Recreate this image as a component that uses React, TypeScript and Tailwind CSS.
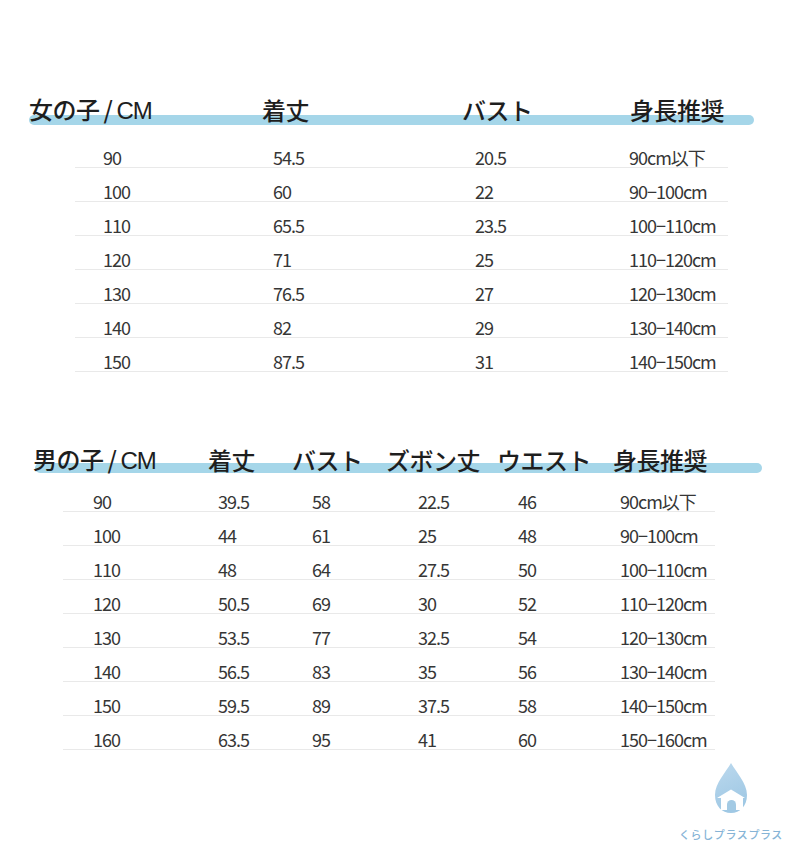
import React from "react";

const girlsHead = [
  { label: "着丈", w: "w-[200px]" },
  { label: "バスト", w: "w-[168px]" },
  { label: "身長推奨", w: "" },
];
const girlsCols = ["w-[170px]", "w-[202px]", "w-[154px]", ""];
const girlsRows = [
  ["90", "54.5", "20.5", "90cm以下"],
  ["100", "60", "22", "90−100cm"],
  ["110", "65.5", "23.5", "100−110cm"],
  ["120", "71", "25", "110−120cm"],
  ["130", "76.5", "27", "120−130cm"],
  ["140", "82", "29", "130−140cm"],
  ["150", "87.5", "31", "140−150cm"],
];

const boysHead = [
  { label: "着丈", w: "w-[84px]" },
  { label: "バスト", w: "w-[94px]" },
  { label: "ズボン丈", w: "w-[111px]" },
  { label: "ウエスト", w: "w-[116px]" },
  { label: "身長推奨", w: "" },
];
const boysCols = ["w-[125px]", "w-[94px]", "w-[106px]", "w-[100px]", "w-[102px]", ""];
const boysRows = [
  ["90", "39.5", "58", "22.5", "46", "90cm以下"],
  ["100", "44", "61", "25", "48", "90−100cm"],
  ["110", "48", "64", "27.5", "50", "100−110cm"],
  ["120", "50.5", "69", "30", "52", "110−120cm"],
  ["130", "53.5", "77", "32.5", "54", "120−130cm"],
  ["140", "56.5", "83", "35", "56", "130−140cm"],
  ["150", "59.5", "89", "37.5", "58", "140−150cm"],
  ["160", "63.5", "95", "41", "60", "150−160cm"],
];

const HeaderRow = ({
  title,
  titleW,
  items,
  className,
}: {
  title: string;
  titleW: string;
  items: { label: string; w: string }[];
  className: string;
}) => (
  <div className={`relative flex h-[24px] items-center text-[24px] leading-none font-medium text-[#1e1e1e] tracking-[-0.5px] ${className}`}>
    <div className={`${titleW} shrink-0 whitespace-nowrap`}>
      {title}
      <span className="px-[4px]">/</span>
      <span style={{ fontFamily: '"Liberation Sans", sans-serif' }} className="font-normal tracking-[-1px]">
        CM
      </span>
    </div>
    {items.map((it) => (
      <div key={it.label} className={`${it.w} shrink-0 whitespace-nowrap`}>
        {it.label}
      </div>
    ))}
  </div>
);

const Rows = ({
  rows,
  cols,
  className,
  pad,
}: {
  rows: string[][];
  cols: string[];
  className: string;
  pad: string;
}) => (
  <div className={className}>
    {rows.map((r) => (
      <div
        key={r[0]}
        className={`flex h-[34px] items-center pt-[12px] ${pad} border-b border-[#e9e9e9] text-[18px] leading-[20px] text-[#363636] tracking-[-1px]`}
      >
        {r.map((c, i) => (
          <div key={i} className={`${cols[i]} shrink-0 whitespace-nowrap`}>
            {c}
          </div>
        ))}
      </div>
    ))}
  </div>
);

const Logo = () => (
  <div className="flex flex-col items-center w-[104px]">
    <svg width="34" height="50" viewBox="0 0 34 50">
      <defs>
        <linearGradient id="drop" x1="0" y1="0" x2="0.3" y2="1">
          <stop offset="0" stopColor="#bcd9ee" />
          <stop offset="1" stopColor="#9fc8e4" />
        </linearGradient>
      </defs>
      <path
        d="M17 0 C12 9 1 20 1 32 C1 43 8 50 17 50 C26 50 33 43 33 32 C33 20 22 9 17 0 Z"
        fill="url(#drop)"
      />
      <path d="M3 35 L17 26.5 L31 35 L29 35 L29 47 L7 47 L7 35 Z" fill="#ffffff" />
      <path d="M13 47 V41.5 a4.5 4.5 0 0 1 9 0 V47 Z" fill="#a3cae4" />
    </svg>
    <div className="mt-[16px] text-[11px] leading-none font-medium tracking-[0.6px] text-[#86b4d6] whitespace-nowrap">
      くらしプラスプラス
    </div>
  </div>
);

export default function App() {
  return (
    <div
      className="w-[790px] h-[856px] bg-white overflow-hidden pt-[98px]"
      style={{ fontFamily: '"Noto Sans CJK JP", "Noto Sans", sans-serif' }}
    >
      {/* girls */}
      <HeaderRow title="女の子" titleW="w-[233px]" items={girlsHead} className="pl-[29px]" />
      <div className="-mt-[7px] ml-[29px] w-[725px] h-[10px] rounded-full bg-[#a5d6e9]" />
      <Rows rows={girlsRows} cols={girlsCols} pad="pl-[28px]" className="mt-[9px] ml-[75px] w-[653px]" />

      {/* boys */}
      <HeaderRow title="男の子" titleW="w-[175px]" items={boysHead} className="mt-[76px] pl-[33px]" />
      <div className="-mt-[9px] ml-[35px] w-[727px] h-[10px] rounded-full bg-[#a5d6e9]" />
      <Rows rows={boysRows} cols={boysCols} pad="pl-[30px]" className="mt-[5px] ml-[63px] w-[652px]" />

      <div className="flex justify-end pr-[7px] mt-[13px]">
        <Logo />
      </div>
    </div>
  );
}
